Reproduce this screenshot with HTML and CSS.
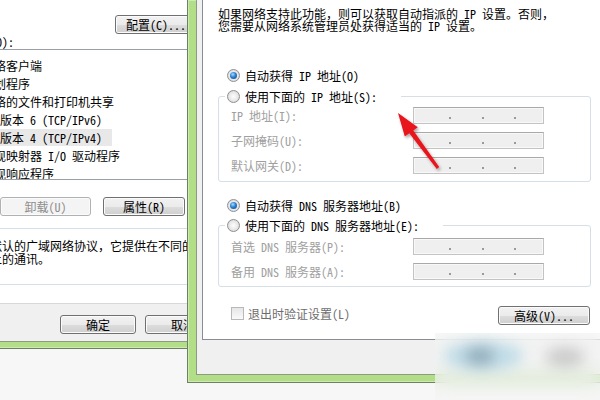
FILE: index.html
```html
<!DOCTYPE html>
<html lang="zh-CN">
<head>
    <meta charset="UTF-8">
    <title>Internet 协议版本 4 (TCP/IPv4) 属性</title>
    <link rel="stylesheet" href="styles.css">
</head>
<body>
    <!-- 本地连接 属性 (behind) -->
    <div class="window window-lan">
        <div class="client">
            <div class="tab-page">
                <div class="config-row">
                    <button class="btn btn-config">配置(C)...</button>
                </div>
                <div class="list-label">此连接使用下列项目(O):</div>
                <ul class="item-list">
                    <li><span class="chk"></span><span class="item-icon"></span><span class="item-text">Microsoft 网络客户端</span></li>
                    <li><span class="chk"></span><span class="item-icon"></span><span class="item-text">QoS 数据包计划程序</span></li>
                    <li><span class="chk"></span><span class="item-icon"></span><span class="item-text">Microsoft 网络的文件和打印机共享</span></li>
                    <li><span class="chk"></span><span class="item-icon"></span><span class="item-text">Internet 协议版本 6 (TCP/IPv6)</span></li>
                    <li class="selected"><span class="chk"></span><span class="item-icon"></span><span class="item-text">Internet 协议版本 4 (TCP/IPv4)</span></li>
                    <li><span class="chk"></span><span class="item-icon"></span><span class="item-text">链路层拓扑发现映射器 I/O 驱动程序</span></li>
                    <li><span class="chk"></span><span class="item-icon"></span><span class="item-text">链路层拓扑发现响应程序</span></li>
                </ul>
                <div class="list-buttons">
                    <button class="btn btn-remove" disabled>卸载(U)</button>
                    <button class="btn btn-props">属性(R)</button>
                </div>
                <div class="desc">
                    <div>默认的广域网络协议，它提供在不同的相互</div>
                    <div>上的通讯。</div>
                </div>
            </div>
            <div class="dialog-buttons">
                <button class="btn btn-dialog">确定</button>
                <button class="btn btn-dialog">取消</button>
            </div>
        </div>
    </div>

    <!-- Internet 协议版本 4 (TCP/IPv4) 属性 -->
    <div class="window window-ip">
        <div class="client">
            <div class="tab-page">
                <p class="intro">如果网络支持此功能，则可以获取自动指派的 IP 设置。否则，<br>您需要从网络系统管理员处获得适当的 IP 设置。</p>

                <label class="radio-row first"><span class="radio checked"></span>自动获得 IP 地址(O)</label>
                <fieldset class="group">
                    <legend><label class="radio-row"><span class="radio"></span>使用下面的 IP 地址(S):</label></legend>
                    <div class="field">
                        <span class="field-label">IP 地址(I):</span>
                        <span class="ipbox"><span class="oct"></span><i></i><span class="oct w2"></span><i></i><span class="oct w3"></span><i></i></span>
                    </div>
                    <div class="field">
                        <span class="field-label">子网掩码(U):</span>
                        <span class="ipbox"><span class="oct"></span><i></i><span class="oct w2"></span><i></i><span class="oct w3"></span><i></i></span>
                    </div>
                    <div class="field">
                        <span class="field-label">默认网关(D):</span>
                        <span class="ipbox"><span class="oct"></span><i></i><span class="oct w2"></span><i></i><span class="oct w3"></span><i></i></span>
                    </div>
                </fieldset>

                <label class="radio-row dns"><span class="radio checked"></span>自动获得 DNS 服务器地址(B)</label>
                <fieldset class="group group-dns">
                    <legend><label class="radio-row"><span class="radio"></span>使用下面的 DNS 服务器地址(E):</label></legend>
                    <div class="field">
                        <span class="field-label">首选 DNS 服务器(P):</span>
                        <span class="ipbox"><span class="oct"></span><i></i><span class="oct w2"></span><i></i><span class="oct w3"></span><i></i></span>
                    </div>
                    <div class="field">
                        <span class="field-label">备用 DNS 服务器(A):</span>
                        <span class="ipbox"><span class="oct"></span><i></i><span class="oct w2"></span><i></i><span class="oct w3"></span><i></i></span>
                    </div>
                </fieldset>

                <div class="bottom-row">
                    <label class="check-row"><span class="checkbox"></span>退出时验证设置(L)</label>
                    <button class="btn btn-advanced">高级(V)...</button>
                </div>
            </div>
        </div>
    </div>

    <!-- red arrow -->
    <svg class="arrow" width="80" height="90" viewBox="0 0 80 90">
        <defs>
            <filter id="shadow" x="-30%" y="-30%" width="160%" height="160%">
                <feDropShadow dx="1.5" dy="2" stdDeviation="1.5" flood-color="#000" flood-opacity="0.35"/>
            </filter>
        </defs>
        <polygon filter="url(#shadow)" fill="#e8141b"
            points="18,13 37.8,27.2 33.3,30.4 59.2,67.1 56.8,68.9 29.3,33.3 24.8,36.4"/>
    </svg>

    <!-- blurred watermark -->
    <div class="blur-patch">
        <span class="blob blob-blue"></span>
        <span class="blob blob-dark"></span>
        <span class="blob blob-gray"></span>
    </div>
</body>
</html>
```

FILE: styles.css
```css
* {
    box-sizing: border-box;
}

html, body {
    margin: 0;
    padding: 0;
}

body {
    position: relative;
    width: 600px;
    height: 400px;
    overflow: hidden;
    background: #f7f7f7;
    font-family: "Noto Sans Mono CJK SC", "Noto Sans CJK SC", sans-serif;
    font-size: 12px;
    color: #000;
}

/* window frames */
.window {
    position: absolute;
    top: 0;
    background: #b2de88;
    border: 1px solid #6f7f66;
    border-top: none;
    box-shadow: inset 0 0 0 1px #cdebb0;
}

.window-lan {
    left: -143px;
    width: 380px;
    padding: 0 7px 6px;
}

.window-ip {
    left: 187px;
    width: 430px;
    padding: 0 8px 7px;
}

.client {
    background: #f0f0f0;
    border: 1px solid #8b9b83;
    border-top: none;
}

.window-lan .client {
    padding: 0 6px 7px;
}

.window-ip .client {
    padding: 0 5px 34px;
}

.tab-page {
    background: #fff;
    border: 1px solid #898c95;
    border-top: none;
}

.window-lan .tab-page {
    padding: 15px 9px 18px;
    border-bottom-color: #d8d8d8;
}

.window-ip .tab-page {
    height: 340px;
    padding: 8px 0 0 15px;
}

/* buttons */
.btn {
    font: inherit;
    color: #000;
    height: 19px;
    padding: 0;
    border: 1px solid #707070;
    border-radius: 3px;
    background: linear-gradient(#f2f2f2 0%, #ebebeb 50%, #dddddd 51%, #cfcfcf 100%);
    box-shadow: inset 0 0 0 1px #fbfbfb;
    line-height: 17px;
}

.btn:disabled {
    color: #8d8d8d;
    border-color: #adb2b5;
    background: #f4f4f4;
}

/* left dialog */
.config-row {
    padding-left: 233px;
}

.btn-config {
    width: 82px;
}

.list-label {
    margin-top: 2px;
    line-height: 12px;
}

.item-list {
    list-style: none;
    margin: 1px 0 0;
    padding: 6px 0 0;
    height: 131px;
    overflow: hidden;
    border: 1px solid #9a9ea6;
    background: #fff;
}

.item-list li {
    display: flex;
    align-items: center;
    height: 18px;
    padding-left: 3px;
    white-space: nowrap;
}

.chk {
    flex: none;
    width: 13px;
    height: 13px;
    margin-right: 3px;
    border: 1px solid #8f8f8f;
    background: #f4f4f4;
}

.item-icon {
    flex: none;
    width: 16px;
    height: 16px;
    margin-right: 4px;
    background: #6d9ac8;
}

.item-text {
    line-height: 17px;
}

.selected .item-text {
    background: #e8e8e8;
    padding-right: 10px;
}

.list-buttons {
    display: flex;
    gap: 12px;
    margin-top: 17px;
    padding-left: 118px;
}

.btn-remove {
    width: 91px;
}

.btn-props {
    width: 82px;
}

.desc {
    margin-top: 12px;
    padding: 10px 0 19px 107px;
    border: 1px solid #d5dfe5;
    border-radius: 3px;
    line-height: 13px;
    white-space: nowrap;
}

.dialog-buttons {
    display: flex;
    gap: 9px;
    margin-top: 11px;
    padding-left: 188px;
}

.btn-dialog {
    width: 76px;
}

/* right dialog */
.intro {
    margin: 0;
    line-height: 12px;
    white-space: nowrap;
}

.radio-row {
    display: flex;
    align-items: center;
    gap: 5px;
    height: 18px;
    white-space: nowrap;
}

.radio-row.first,
.radio-row.dns {
    height: 20px;
    padding-left: 9px;
}

.radio-row.first {
    margin-top: 33px;
}

.radio-row.dns {
    margin-top: 13px;
}

.radio {
    flex: none;
    position: relative;
    width: 13px;
    height: 13px;
    border-radius: 50%;
    border: 1px solid #8e8f8f;
    background: radial-gradient(circle at 50% 50%, #fdfdfd 0, #ececec 45%, #cfcfcf 100%);
}

.radio.checked::after {
    content: "";
    position: absolute;
    left: 2px;
    top: 2px;
    width: 7px;
    height: 7px;
    border-radius: 50%;
    background: radial-gradient(circle at 40% 35%, #a6dcff 0, #2c7fd2 45%, #0c4687 100%);
}

.group {
    width: 373px;
    min-width: 0;
    margin: 2px 0 0;
    padding: 0 0 6px;
    border: 1px solid #d5dfe5;
    border-radius: 3px;
}

.group legend {
    margin-left: 6px;
    padding: 0 24px 0 2px;
}

.group-dns {
    margin-top: 1px;
    padding: 2px 0 5px;
}

.field {
    display: flex;
    align-items: center;
    height: 20px;
    padding-left: 12px;
}

.field + .field {
    margin-top: 5px;
}

.field-label {
    width: 182px;
    color: #a0a0a0;
    white-space: nowrap;
}

.ipbox {
    display: flex;
    align-items: flex-end;
    width: 131px;
    height: 17px;
    padding-bottom: 4px;
    border: 1px solid #c3c3c3;
    border-top-color: #a9a9a9;
    background: #efefef;
    box-shadow: inset 0 0 0 1px #f8f8f8;
}

.ipbox .oct {
    width: 35px;
}

.ipbox .w2 {
    width: 31px;
}

.ipbox .w3 {
    width: 30px;
}

.ipbox i {
    width: 2px;
    height: 2px;
    background: #9a9a9a;
}

.bottom-row {
    display: flex;
    justify-content: space-between;
    align-items: flex-start;
    width: 373px;
    margin-top: 16px;
}

.check-row {
    display: flex;
    align-items: center;
    gap: 4px;
    height: 20px;
    padding-left: 13px;
    color: #6d6d6d;
}

.checkbox {
    width: 13px;
    height: 13px;
    border: 1px solid #b9b9b9;
    background: linear-gradient(#e6e6e6, #fafafa);
}

.btn-advanced {
    width: 92px;
    margin-top: 3px;
    margin-right: 1px;
}

/* overlays */
.arrow {
    position: absolute;
    left: 380px;
    top: 100px;
}

.blur-patch {
    position: absolute;
    left: 435px;
    top: 333px;
    width: 165px;
    height: 67px;
    overflow: hidden;
    background: rgba(244, 245, 243, 0.6);
    backdrop-filter: blur(8px);
}

.blob {
    position: absolute;
    border-radius: 50%;
    filter: blur(7px);
}

.blob-blue {
    left: 8px;
    top: 8px;
    width: 80px;
    height: 30px;
    background: rgba(160, 205, 225, 0.6);
}

.blob-dark {
    left: 30px;
    top: 14px;
    width: 30px;
    height: 18px;
    background: rgba(90, 115, 130, 0.45);
}

.blob-gray {
    left: 110px;
    top: 14px;
    width: 40px;
    height: 20px;
    background: rgba(130, 130, 130, 0.35);
}
```
